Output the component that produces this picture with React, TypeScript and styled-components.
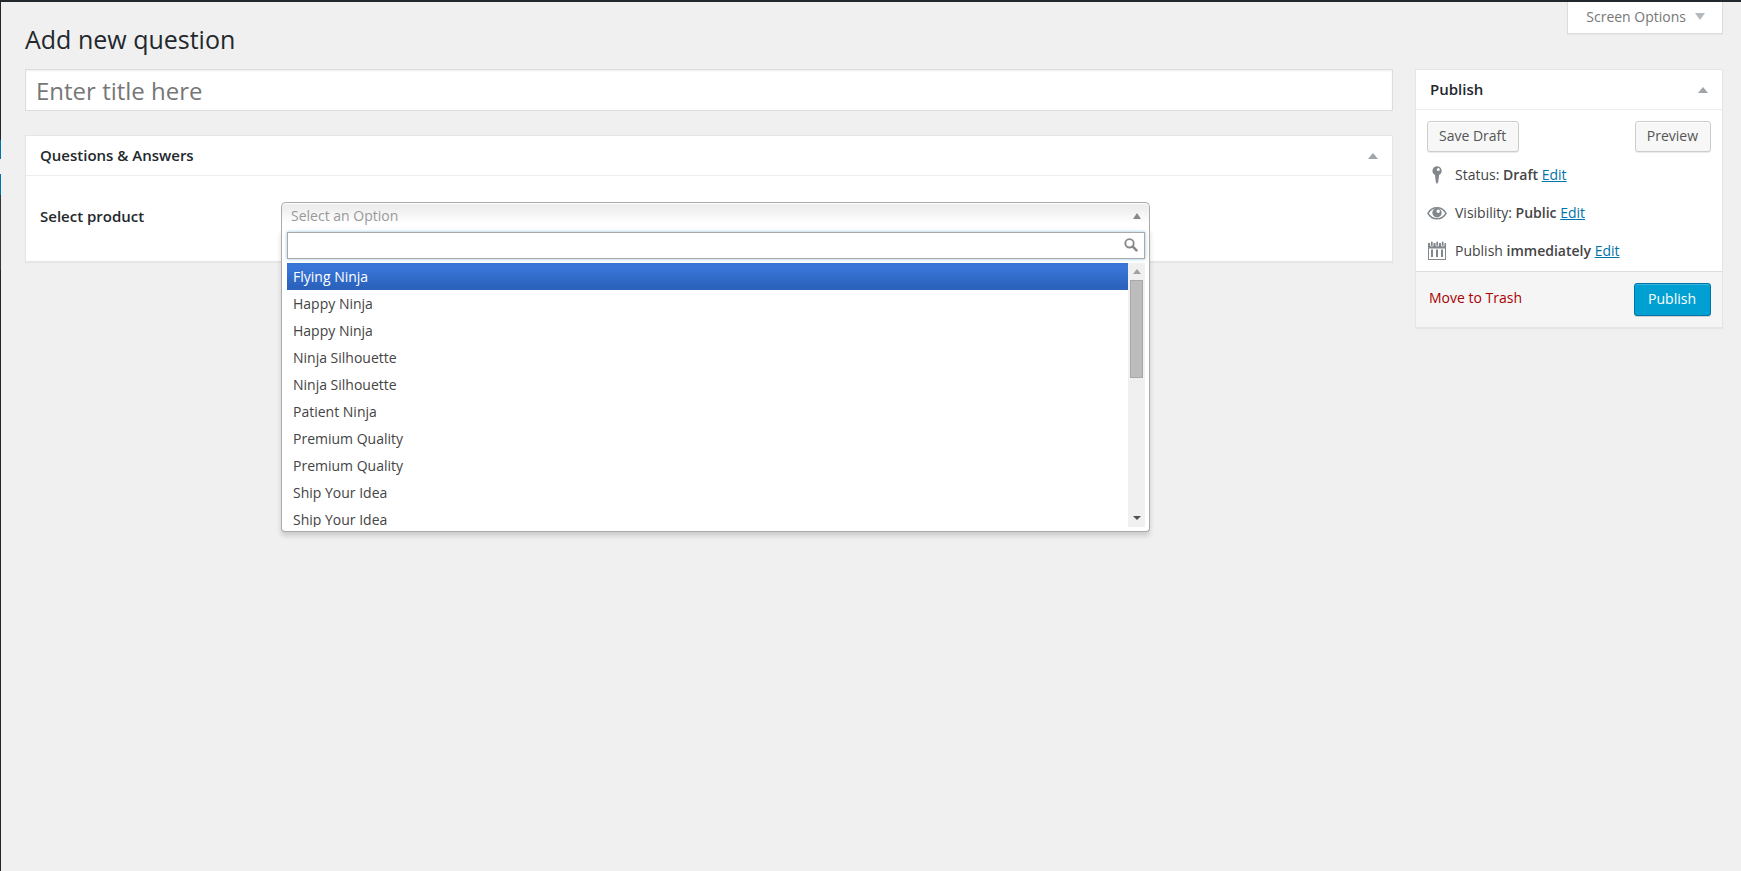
import React from "react";
import styled, { createGlobalStyle, css } from "styled-components";

const GlobalStyle = createGlobalStyle`
  *, *::before, *::after { box-sizing: border-box; }
  html, body, #root { min-height: 100%; margin: 0; }
  html { background: #f0f0f0; height: 100%; }
  body, #root { height: 100%; }
  body {
    color: #444;
    font-family: "Open Sans", sans-serif;
    font-size: 14px;
    line-height: 20px;
  }
  button, input { font-family: inherit; font-size: inherit; margin: 0; }
`;

const Shell = styled.div`
  display: flex;
  min-height: 100vh;
  border-top: 2px solid #23282d;
`;

const MenuEdge = styled.div`
  flex: 0 0 1px;
  display: flex;
  flex-direction: column;
`;

const MenuSlice = styled.div<{ $color: string; $height?: number }>`
  background: ${(p) => p.$color};
  ${(p) => (p.$height ? css`flex: 0 0 ${p.$height}px;` : css`flex: 1;`)}
`;

const Content = styled.main`
  flex: 1;
  min-width: 0;
  padding: 0 18px 0 24px;
`;

const TopRow = styled.header`
  display: flex;
  justify-content: space-between;
  align-items: flex-start;
  height: 67px;
`;

const PageTitle = styled.h1`
  margin: 0;
  padding-top: 20px;
  color: #23282d;
  font-size: 25px;
  font-weight: 400;
  line-height: 34px;
`;

const ScreenOptions = styled.button`
  display: flex;
  align-items: center;
  gap: 9px;
  height: 32px;
  padding: 0 17px 2px 18px;
  border: 1px solid #ddd;
  border-top: 0;
  background: #fff;
  color: #777;
  box-shadow: 0 1px 1px rgba(0, 0, 0, 0.04);
`;

const Columns = styled.div`
  display: grid;
  grid-template-columns: minmax(0, 1fr) 308px;
  gap: 22px;
  align-items: start;
`;

const MainColumn = styled.div`
  display: flex;
  flex-direction: column;
  gap: 24px;
`;

const TitleInput = styled.input`
  width: 100%;
  height: 42px;
  padding: 0 10px;
  border: 1px solid #ddd;
  border-radius: 0;
  background: #fff;
  box-shadow: inset 0 1px 2px rgba(0, 0, 0, 0.07);
  color: #32373c;
  font-size: 24px;
  &::placeholder { color: #777; }
`;

const Box = styled.section`
  border: 1px solid #e5e5e5;
  background: #fff;
  box-shadow: 0 1px 1px rgba(0, 0, 0, 0.04);
`;

const BoxHeader = styled.div`
  display: flex;
  align-items: center;
  justify-content: space-between;
  height: 40px;
  padding: 0 12px 2px 14px;
  border-bottom: 1px solid #eee;
`;

const BoxTitle = styled.h2`
  margin: 0;
  color: #23282d;
  font-size: 15px;
  font-weight: 600;
  line-height: 20px;
`;

const ToggleButton = styled.button`
  display: flex;
  padding: 4px 2px 2px;
  border: 0;
  background: none;
`;

const Triangle = styled.span<{ $down?: boolean; $color: string; $half: number; $tall: number }>`
  width: 0;
  height: 0;
  border: ${(p) => p.$half}px solid transparent;
  ${(p) =>
    p.$down
      ? css`border-top: ${p.$tall}px solid ${p.$color}; border-bottom: 0;`
      : css`border-bottom: ${p.$tall}px solid ${p.$color}; border-top: 0;`}
`;

const FieldRow = styled.div`
  display: grid;
  grid-template-columns: 241px minmax(0, 1fr) 228px;
  align-items: start;
  height: 85px;
  padding: 26px 14px 0;
`;

const FieldLabel = styled.label`
  padding-top: 4px;
  color: #23282d;
  font-size: 15px;
  font-weight: 600;
`;

const Combo = styled.div`
  position: relative;
`;

const ComboTrigger = styled.button`
  display: flex;
  align-items: center;
  justify-content: space-between;
  width: 100%;
  height: 26px;
  padding: 0 8px 0 9px;
  border: 1px solid #aaa;
  border-bottom: 0;
  border-radius: 5px 5px 0 0;
  background: linear-gradient(#eee 20%, #fff 80%);
  box-shadow: inset 0 1px 0 #fff;
  color: #999;
`;

const ComboPanel = styled.div`
  position: absolute;
  z-index: 10;
  top: 100%;
  left: 0;
  right: 0;
  padding: 4px 4px 4px 5px;
  border: 1px solid #aaa;
  border-top: 0;
  border-radius: 0 0 4px 4px;
  background: #fff;
  box-shadow: 0 4px 5px rgba(0, 0, 0, 0.15);
`;

const SearchField = styled.div`
  display: flex;
  align-items: center;
  height: 27px;
  margin-bottom: 4px;
  padding: 0 6px 2px 0;
  border: 1px solid #aaa;
  box-shadow: 0 0 3px rgba(30, 140, 190, 0.5);
`;

const SearchInput = styled.input`
  flex: 1;
  min-width: 0;
  height: 23px;
  padding: 0 5px;
  border: 0;
  outline: 0;
  background: transparent;
`;

const ListArea = styled.div`
  display: flex;
  height: 264px;
`;

const Options = styled.ul`
  flex: 1;
  margin: 0;
  padding: 0;
  overflow: hidden;
  list-style: none;
`;

const Option = styled.li<{ $active?: boolean }>`
  height: 27px;
  padding: 0 6px;
  line-height: 27px;
  ${(p) =>
    p.$active &&
    css`
      background: linear-gradient(#3875d7 20%, #2a62bc 90%);
      color: #fff;
    `}
`;

const ScrollTrack = styled.div`
  display: flex;
  flex-direction: column;
  align-items: center;
  justify-content: space-between;
  width: 17px;
  padding: 6px 2px 7px;
  background: #f0f0f0;
`;

const ScrollHead = styled.div`
  display: flex;
  flex-direction: column;
  align-items: center;
  gap: 6px;
`;

const ScrollThumb = styled.div`
  width: 13px;
  height: 98px;
  border: 1px solid #a8a8a8;
  background: #bcbcbc;
`;

const PublishBody = styled.div`
  padding: 11px 11px 10px;
`;

const ButtonRow = styled.div`
  display: flex;
  justify-content: space-between;
  margin-bottom: 13px;
`;

const Button = styled.button<{ $primary?: boolean }>`
  height: 31px;
  padding: 0 12px 2px 11px;
  border: 1px solid #ccc;
  border-radius: 3px;
  background: #f7f7f7;
  box-shadow: inset 0 1px 0 #fff, 0 1px 0 rgba(0, 0, 0, 0.08);
  color: #555;
  white-space: nowrap;
  ${(p) =>
    p.$primary &&
    css`
      height: 33px;
      padding: 0 14px 2px 13px;
      border-color: #0073aa;
      background: #00a0d2;
      box-shadow: inset 0 1px 0 rgba(120, 200, 230, 0.5), 0 1px 0 rgba(0, 0, 0, 0.15);
      color: #fff;
    `}
`;

const StatusList = styled.ul`
  display: flex;
  flex-direction: column;
  gap: 18px;
  margin: 0;
  padding: 0;
  list-style: none;
`;

const StatusRow = styled.li`
  display: flex;
  align-items: center;
  gap: 8px;
  height: 20px;
  svg { flex: none; }
  b { font-weight: 600; }
`;

const Link = styled.a`
  color: #0073aa;
`;

const TrashLink = styled.a`
  padding-bottom: 2px;
  color: #a00;
  text-decoration: none;
`;

const BoxFooter = styled.div`
  display: flex;
  align-items: center;
  justify-content: space-between;
  height: 56px;
  padding: 0 11px 1px 13px;
  border-top: 1px solid #ddd;
  background: #f5f5f5;
`;

const PinIcon = () => (
  <svg width="20" height="20" viewBox="0 0 20 20" fill="#82878c" aria-hidden="true">
    <path fillRule="evenodd" d="M10 1.2a4.6 4.6 0 0 1 2.1 8.7L11.2 17 10 19 8.8 17 8 9.9A4.6 4.6 0 0 1 10 1.2zm1.3 1.7a1.5 1.5 0 1 0 0 3 1.5 1.5 0 0 0 0-3z" />
  </svg>
);

const EyeIcon = () => (
  <svg width="20" height="20" viewBox="0 0 20 20" aria-hidden="true">
    <path d="M1 10.3C3 6.600 6.300 4.700 10 4.700s7 1.900 9 5.600c-2 3.600-5.300 5.500-9 5.500s-7-1.900-9-5.500z" fill="none" stroke="#82878c" strokeWidth="1.500" />
    <path fillRule="evenodd" fill="#82878c" d="M10 5a4.700 4.700 0 1 1 0 9.400A4.700 4.700 0 0 1 10 5zm1.200 1.500a1.700 1.700 0 1 0 0 3.400 1.700 1.700 0 0 0 0-3.400z" />
  </svg>
);

const CalendarIcon = () => (
  <svg width="20" height="20" viewBox="0 0 20 20" aria-hidden="true">
    <path fillRule="evenodd" fill="#82878c" d="M1 2h2v2.500a2 2 0 0 0 3.500 0V2h2v2.500a2 2 0 0 0 3.500 0V2h2v2.500a2 2 0 0 0 3.500 0V2H19v17H1zm1 5.500V18h16V7.500zM4 8.500h2V16H4zm5 0h2V16H9zm5 0h2V16h-2z" />
    <path stroke="#82878c" strokeWidth="1.800" strokeLinecap="round" d="M4.800 1.500v2.500M10.200 1.500v2.500M15.700 1.500v2.500" />
  </svg>
);

const SearchIcon = () => (
  <svg width="14" height="14" viewBox="0 0 14 14" fill="none" stroke="#888" aria-hidden="true">
    <circle cx="5.500" cy="5.300" r="4.200" strokeWidth="1.900" />
    <path d="M8.800 8.600l3.700 3.700" strokeWidth="2.600" strokeLinecap="round" />
  </svg>
);

const edgeSlices = [
  { color: "#23282d", height: 138 },
  { color: "#0073aa", height: 19 },
  { color: "#f0f0f0", height: 15 },
  { color: "#0073aa", height: 21 },
  { color: "#32373c", height: 75 },
  { color: "#23282d" },
];

const products = [
  "Flying Ninja",
  "Happy Ninja",
  "Happy Ninja",
  "Ninja Silhouette",
  "Ninja Silhouette",
  "Patient Ninja",
  "Premium Quality",
  "Premium Quality",
  "Ship Your Idea",
  "Ship Your Idea",
];

const statusRows = [
  { icon: <PinIcon />, label: "Status:", value: "Draft" },
  { icon: <EyeIcon />, label: "Visibility:", value: "Public" },
  { icon: <CalendarIcon />, label: "Publish", value: "immediately" },
];

const ProductSelect = () => (
  <Combo>
    <ComboTrigger id="product" type="button" aria-haspopup="listbox" aria-expanded="true">
      Select an Option
      <Triangle $color="#888" $half={4} $tall={6} />
    </ComboTrigger>
    <ComboPanel>
      <SearchField>
        <SearchInput type="text" aria-label="Search products" />
        <SearchIcon />
      </SearchField>
      <ListArea>
        <Options role="listbox" aria-label="Products">
          {products.map((name, i) => (
            <Option key={i} role="option" aria-selected={i === 0} $active={i === 0}>
              {name}
            </Option>
          ))}
        </Options>
        <ScrollTrack aria-hidden="true">
          <ScrollHead>
            <Triangle $color="#a0a0a0" $half={4} $tall={5} />
            <ScrollThumb />
          </ScrollHead>
          <Triangle $down $color="#505050" $half={4} $tall={4} />
        </ScrollTrack>
      </ListArea>
    </ComboPanel>
  </Combo>
);

const PublishBox = () => (
  <Box>
    <BoxHeader>
      <BoxTitle>Publish</BoxTitle>
      <ToggleButton type="button" aria-label="Toggle Publish panel">
        <Triangle $color="#a0a5aa" $half={5} $tall={6} />
      </ToggleButton>
    </BoxHeader>
    <PublishBody>
      <ButtonRow>
        <Button type="button">Save Draft</Button>
        <Button type="button">Preview</Button>
      </ButtonRow>
      <StatusList>
        {statusRows.map((row) => (
          <StatusRow key={row.label}>
            {row.icon}
            <span>
              {row.label} <b>{row.value}</b> <Link href="#edit">Edit</Link>
            </span>
          </StatusRow>
        ))}
      </StatusList>
    </PublishBody>
    <BoxFooter>
      <TrashLink href="#trash">Move to Trash</TrashLink>
      <Button type="button" $primary>
        Publish
      </Button>
    </BoxFooter>
  </Box>
);

export default function App() {
  return (
    <>
      <GlobalStyle />
      <Shell>
        <MenuEdge>
          {edgeSlices.map((slice, i) => (
            <MenuSlice key={i} $color={slice.color} $height={slice.height} />
          ))}
        </MenuEdge>
        <Content>
          <TopRow>
            <PageTitle>Add new question</PageTitle>
            <ScreenOptions type="button">
              Screen Options
              <Triangle $down $color="#b4b9be" $half={5} $tall={7} />
            </ScreenOptions>
          </TopRow>
          <Columns>
            <MainColumn>
              <TitleInput type="text" placeholder="Enter title here" aria-label="Title" />
              <Box>
                <BoxHeader>
                  <BoxTitle>Questions &amp; Answers</BoxTitle>
                  <ToggleButton type="button" aria-label="Toggle Questions and Answers panel">
                    <Triangle $color="#a0a5aa" $half={5} $tall={6} />
                  </ToggleButton>
                </BoxHeader>
                <FieldRow>
                  <FieldLabel htmlFor="product">Select product</FieldLabel>
                  <ProductSelect />
                </FieldRow>
              </Box>
            </MainColumn>
            <PublishBox />
          </Columns>
        </Content>
      </Shell>
    </>
  );
}
